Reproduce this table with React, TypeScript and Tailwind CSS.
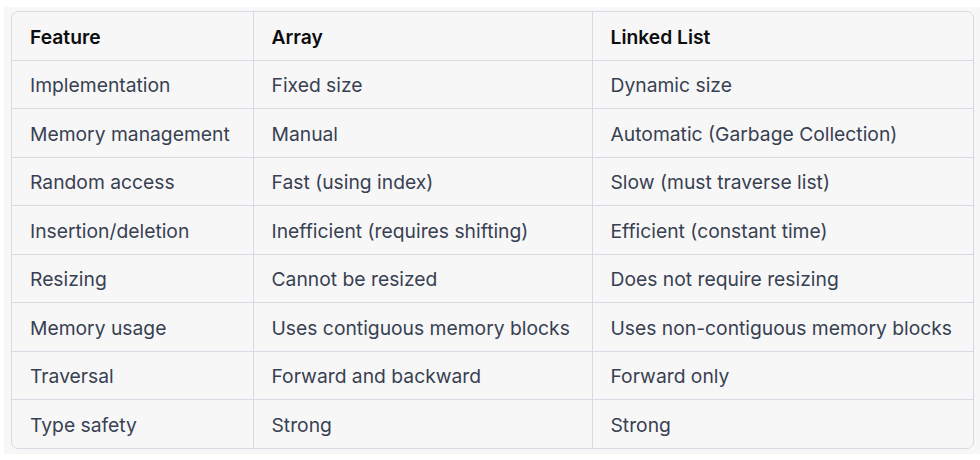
const rows = [
  ["Implementation", "Fixed size", "Dynamic size"],
  ["Memory management", "Manual", "Automatic (Garbage Collection)"],
  ["Random access", "Fast (using index)", "Slow (must traverse list)"],
  ["Insertion/deletion", "Inefficient (requires shifting)", "Efficient (constant time)"],
  ["Resizing", "Cannot be resized", "Does not require resizing"],
  ["Memory usage", "Uses contiguous memory blocks", "Uses non-contiguous memory blocks"],
  ["Traversal", "Forward and backward", "Forward only"],
  ["Type safety", "Strong", "Strong"],
];

export default function App() {
  return (
    <div className="w-[980px] h-[460px] bg-white pt-[7px] pl-[4px] font-['Inter',sans-serif]">
      <div className="h-[447px] bg-[#f7f7f8] pt-[4px] pl-[7px] pr-[6px]">
        <div className="border border-[#d9d9e3] rounded-[7px] overflow-hidden">
          <table className="w-full table-fixed border-collapse text-[19.3px] text-[#374151]">
            <colgroup>
              <col className="w-[241px]" />
              <col className="w-[339px]" />
              <col />
            </colgroup>
            <thead>
              <tr className="h-[48px]">
                {["Feature", "Array", "Linked List"].map((h, i) => (
                  <th
                    key={h}
                    className={`text-left font-semibold text-[#0d0d0d] pl-[18px] pt-[3px] ${i > 0 ? "border-l border-[#d9d9e3]" : ""}`}
                  >
                    {h}
                  </th>
                ))}
              </tr>
            </thead>
            <tbody>
              {rows.map((r) => (
                <tr key={r[0]} className="h-[48.5px] border-t border-[#d9d9e3]">
                  {r.map((c, i) => (
                    <td
                      key={i}
                      className={`pl-[18px] pt-[3px] whitespace-nowrap ${i > 0 ? "border-l border-[#d9d9e3]" : ""}`}
                    >
                      {c}
                    </td>
                  ))}
                </tr>
              ))}
            </tbody>
          </table>
        </div>
      </div>
    </div>
  );
}
